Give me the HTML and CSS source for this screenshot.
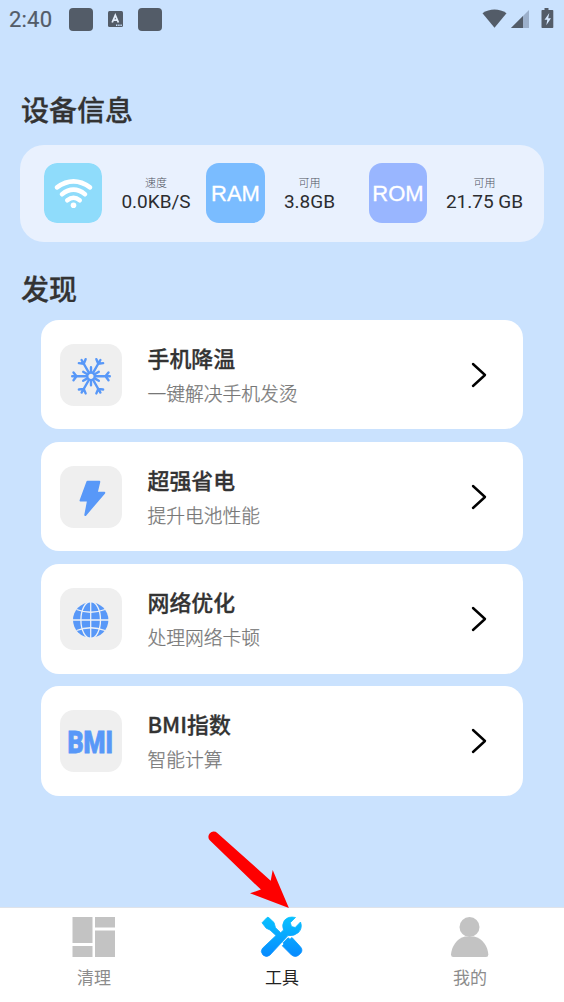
FILE: index.html
```html
<!DOCTYPE html>
<html lang="zh-CN">
<head>
    <meta charset="UTF-8">
    <meta name="viewport" content="width=device-width, initial-scale=1.0">
    <title>工具</title>
    <link rel="stylesheet" href="styles.css">
</head>
<body>

    <!-- Status bar -->
    <div class="status-bar">
        <span class="time">2:40</span>
        <span class="status-square"></span>
        <svg class="status-a" width="15" height="16" viewBox="0 0 15 16">
            <rect width="15" height="16" rx="1.5" fill="#535c68"/>
            <path d="M4.2 11.5 7.3 4.2 10.4 11.5M5.4 9.2H9.2" fill="none" stroke="#e4eefb" stroke-width="1.8"/>
            <path d="M8 14.2h1.4M10.2 14.2h1.4M12.4 14.2h1.4" stroke="#cae2fe" stroke-width="1.4"/>
        </svg>
        <span class="status-square"></span>
        <svg class="status-right" width="72" height="20" viewBox="0 0 72 20">
            <path d="M0.5 5.2C7.5 0.2 17.5 0.2 24.5 5.2L12.5 19.8Z" fill="#535c68"/>
            <path d="M29 20 47 2V20Z" fill="#9cb0cb"/>
            <path d="M29 20 41 8V20Z" fill="#535c68"/>
            <path d="M62.5 0h4v2H70.5q.8 0 .8.8V19.2q0 .8-.8.8H60.300q-.8 0-.8-.8V2.800q0-.8.8-.8h2.200Z" fill="#535c68"/>
            <path d="M67.300 5 62.5 11.800H65.300L64.300 17.300 69 10.200H66.200Z" fill="#d5e8ff"/>
        </svg>
    </div>

    <main class="content">
        <h2 class="section-title">设备信息</h2>

        <div class="device-card">
            <svg class="tile" width="58" height="60" viewBox="0 0 58 60">
                <rect width="58" height="60" rx="13" fill="#8fdcfb"/>
                <g fill="none" stroke="#fff" stroke-width="4.6" stroke-linecap="round">
                    <path d="M13 24.300Q29.500 12.300 46 24.300"/>
                    <path d="M18 31.200Q29.500 22.200 41 31.200"/>
                    <path d="M23.300 37.200Q29.500 32.300 35.700 37.200"/>
                </g>
                <circle cx="29.5" cy="42.3" r="2.8" fill="#fff"/>
            </svg>
            <div class="stat speed">
                <span class="stat-label">速度</span>
                <span class="stat-value">0.0KB/S</span>
            </div>
            <div class="tile ram">RAM</div>
            <div class="stat free-ram">
                <span class="stat-label">可用</span>
                <span class="stat-value">3.8GB</span>
            </div>
            <div class="tile rom">ROM</div>
            <div class="stat free-rom">
                <span class="stat-label">可用</span>
                <span class="stat-value">21.75 GB</span>
            </div>
        </div>

        <h2 class="section-title discover">发现</h2>

        <div class="tool-list">
            <div class="tool">
                <svg class="tool-icon" width="62" height="62" viewBox="0 0 62 62">
                    <g transform="translate(31 32.3)" fill="none" stroke="#5898f8" stroke-width="2.4" stroke-linecap="round">
                        <circle r="3.8"/>
                        <g id="arm">
                            <path d="M4 0H18.800M14.500 0l3-3.900M14.500 0l3 3.900"/>
                            <path d="M4.500 2.600 7.800 4.500"/>
                        </g>
                        <use href="#arm" transform="rotate(60)"/>
                        <use href="#arm" transform="rotate(120)"/>
                        <use href="#arm" transform="rotate(180)"/>
                        <use href="#arm" transform="rotate(240)"/>
                        <use href="#arm" transform="rotate(300)"/>
                    </g>
                </svg>
                <div class="tool-text">
                    <h3>手机降温</h3>
                    <p>一键解决手机发烫</p>
                </div>
                <svg class="chevron" width="18" height="26" viewBox="0 0 18 26"><path d="M3 2 15 13 3 24"/></svg>
            </div>

            <div class="tool">
                <svg class="tool-icon" width="62" height="62" viewBox="0 0 62 62">
                    <path d="M27.500 15.700H39.300L36.700 26.800H44.300L25.300 49 28 34.600H20.500Z" fill="#5898f8" stroke="#5898f8" stroke-width="2" stroke-linejoin="round"/>
                </svg>
                <div class="tool-text">
                    <h3>超强省电</h3>
                    <p>提升电池性能</p>
                </div>
                <svg class="chevron" width="18" height="26" viewBox="0 0 18 26"><path d="M3 2 15 13 3 24"/></svg>
            </div>

            <div class="tool">
                <svg class="tool-icon" width="62" height="62" viewBox="0 0 62 62">
                    <circle cx="30.7" cy="32" r="17.7" fill="#5898f8"/>
                    <g fill="none" stroke="#eef1f5" stroke-width="1.3">
                        <path d="M30.700 14V50M13 32H49"/>
                        <ellipse cx="30.7" cy="32" rx="9.8" ry="18.5"/>
                        <path d="M16.500 21.500Q30.700 27 45 21.500M16.500 42.500Q30.700 37 45 42.500"/>
                    </g>
                </svg>
                <div class="tool-text">
                    <h3>网络优化</h3>
                    <p>处理网络卡顿</p>
                </div>
                <svg class="chevron" width="18" height="26" viewBox="0 0 18 26"><path d="M3 2 15 13 3 24"/></svg>
            </div>

            <div class="tool">
                <div class="tool-icon bmi"><span>BMI</span></div>
                <div class="tool-text">
                    <h3>BMI指数</h3>
                    <p>智能计算</p>
                </div>
                <svg class="chevron" width="18" height="26" viewBox="0 0 18 26"><path d="M3 2 15 13 3 24"/></svg>
            </div>
        </div>
    </main>

    <!-- Bottom navigation -->
    <nav class="tab-bar">
        <div class="tab">
            <svg width="44" height="42" viewBox="0 0 44 42" fill="#c3c3c3">
                <rect x="0.5" y="1" width="20" height="26"/>
                <rect x="0.5" y="30" width="20" height="11"/>
                <rect x="23" y="1" width="20" height="10.5"/>
                <rect x="23" y="14.5" width="20" height="26.5"/>
            </svg>
            <span>清理</span>
        </div>
        <div class="tab active">
            <svg width="44" height="42" viewBox="0 0 44 42">
                <defs>
                    <linearGradient id="toolFill" gradientUnits="userSpaceOnUse" x1="0" y1="0" x2="0" y2="42">
                        <stop offset="0" stop-color="#08c3ff"/>
                        <stop offset="1" stop-color="#0788ff"/>
                    </linearGradient>
                </defs>
                <g fill="url(#toolFill)" stroke="url(#toolFill)" stroke-width="0.8" stroke-linejoin="round">
                    <path d="M2 6.800 7 1.500Q8 .8 9 1.800L14 6.500 15.500 11.700 20.700 16.700 23.500 14Q21.500 9 24.300 4.500Q28.500-.2 35.500 1.500L30.300 6.700 31.500 10.500 35.200 11.500 40.500 6Q42.800 12 38.500 16.500Q34 20.500 28 19.600L10 39Q6.500 42 3 39Q-.1 35.500 2.500 32.300L16 19.500 10 14 6.200 12.200Z"/>
                    <path d="M22.300 29.800 24 28 23 26.800 28 21.800 30 23.200 32 21.500 40.200 30.500Q43.500 34 40.500 37.500Q36 42.500 31.500 39Z"/>
                </g>
            </svg>
            <span>工具</span>
        </div>
        <div class="tab">
            <svg width="44" height="42" viewBox="0 0 44 42" fill="#c3c3c3">
                <circle cx="21.5" cy="11" r="10"/>
                <path d="M17 20.500H26C35 22.500 40 31 40.300 38.500Q40.300 41 38 41H5.200Q3 41 3 38.500C3.500 31 8.500 22.500 17 20.500Z"/>
            </svg>
            <span>我的</span>
        </div>
    </nav>

    <svg class="pointer" width="84" height="80" viewBox="0 0 84 80">
        <path d="M11.300 4 64.700 51.700 66.700 41 82.900 79 44 64.300 54.900 60.600 4 11.600A5 5 0 0 1 11.300 4Z" fill="#fe0000"/>
    </svg>

</body>
</html>
```

FILE: styles.css
```css
* {
    box-sizing: border-box;
}

body {
    margin: 0;
    height: 1002px;
    display: flex;
    flex-direction: column;
    position: relative;
    overflow: hidden;
    background-color: #cae2fe;
    font-family: Roboto, "Noto Sans CJK SC", sans-serif;
    color: #333;
}

h2, h3, p {
    margin: 0;
    font-family: "Noto Sans CJK SC", sans-serif;
}

svg {
    display: block;
    flex: none;
}

.status-bar {
    height: 38px;
    padding: 0 10px 0 9px;
    display: flex;
    align-items: center;
}

.time {
    width: 60px;
    font-size: 22px;
    letter-spacing: 0.2px;
    color: #535c68;
    -webkit-text-stroke: 0.2px #535c68;
}

.status-square {
    width: 24px;
    height: 23px;
    border-radius: 4px;
    background-color: #535c68;
}

.status-a {
    margin: 0 15px;
}

.status-right {
    margin: -2px 0 0 auto;
}

.content {
    flex: 1;
    padding: 51px 20px 0;
}

.section-title {
    height: 40px;
    padding-left: 1px;
    font-size: 28px;
    line-height: 40px;
    font-weight: 500;
    -webkit-text-stroke: 0.3px #333;
}

.device-card {
    height: 97px;
    margin-top: 15.5px;
    padding-left: 24px;
    display: flex;
    align-items: center;
    border-radius: 24px;
    background-color: #e9f1fe;
}

.tile {
    flex: none;
    width: 58px;
    height: 60px;
    border-radius: 13px;
    color: #fff;
    font-family: "Liberation Sans", sans-serif;
    font-size: 22px;
    line-height: 62px;
    text-align: center;
    -webkit-text-stroke: 0.3px #fff;
}

.ram {
    width: 59px;
    background-color: #7abcff;
}

.rom {
    background-color: #99b6ff;
}

.stat {
    display: flex;
    flex-direction: column;
    align-items: center;
    white-space: nowrap;
}

.speed {
    width: 104px;
    padding-left: 4px;
}

.free-ram {
    width: 104px;
    padding-right: 15px;
}

.free-rom {
    width: 115px;
}

.stat-label {
    font-size: 11px;
    line-height: 17px;
    font-weight: 300;
    color: #50545e;
}

.stat-value {
    font-size: 19px;
    line-height: 20px;
    color: #2c2d30;
}

.discover {
    margin-top: 26.5px;
}

.tool-list {
    margin-top: 12px;
    padding: 0 21px;
    display: flex;
    flex-direction: column;
    gap: 12.7px;
}

.tool {
    height: 109.4px;
    padding: 0 35px 0 18.5px;
    display: flex;
    align-items: center;
    border-radius: 18px;
    background-color: #fff;
}

.tool-icon {
    border-radius: 14px;
    background-color: #efefef;
}

.tool-text {
    flex: 1;
    padding: 2px 0 0 26px;
}

.tool-text h3 {
    font-size: 21.9px;
    line-height: 34px;
    font-weight: 500;
    -webkit-text-stroke: 0.3px #333;
}

.tool-text p {
    font-size: 18.75px;
    line-height: 36px;
    font-weight: 300;
    color: #777;
    -webkit-text-stroke: 0.25px #777;
}

.chevron path {
    fill: none;
    stroke: #000;
    stroke-width: 2.4;
    stroke-linecap: round;
    stroke-linejoin: round;
}

.bmi {
    flex: none;
    width: 62px;
    height: 62px;
    padding-top: 3px;
    display: flex;
    align-items: center;
    justify-content: center;
    font-size: 32px;
    line-height: 40px;
    font-weight: 900;
    color: #5898f8;
    -webkit-text-stroke: 0.8px #5898f8;
}

.bmi span {
    transform: scaleX(0.78);
}

.tab-bar {
    height: 95px;
    display: grid;
    grid-template-columns: repeat(3, 1fr);
    border-top: 1px solid #dfe3ea;
    background-color: #fff;
}

.tab {
    padding-top: 8px;
    display: flex;
    flex-direction: column;
    align-items: center;
    font-family: "Noto Sans CJK SC", sans-serif;
    font-size: 17px;
    line-height: 24px;
    color: #8c8c8c;
}

.tab span {
    margin-top: 7px;
}

.active {
    color: #222;
}

.pointer {
    position: absolute;
    left: 206px;
    top: 829px;
}
```
